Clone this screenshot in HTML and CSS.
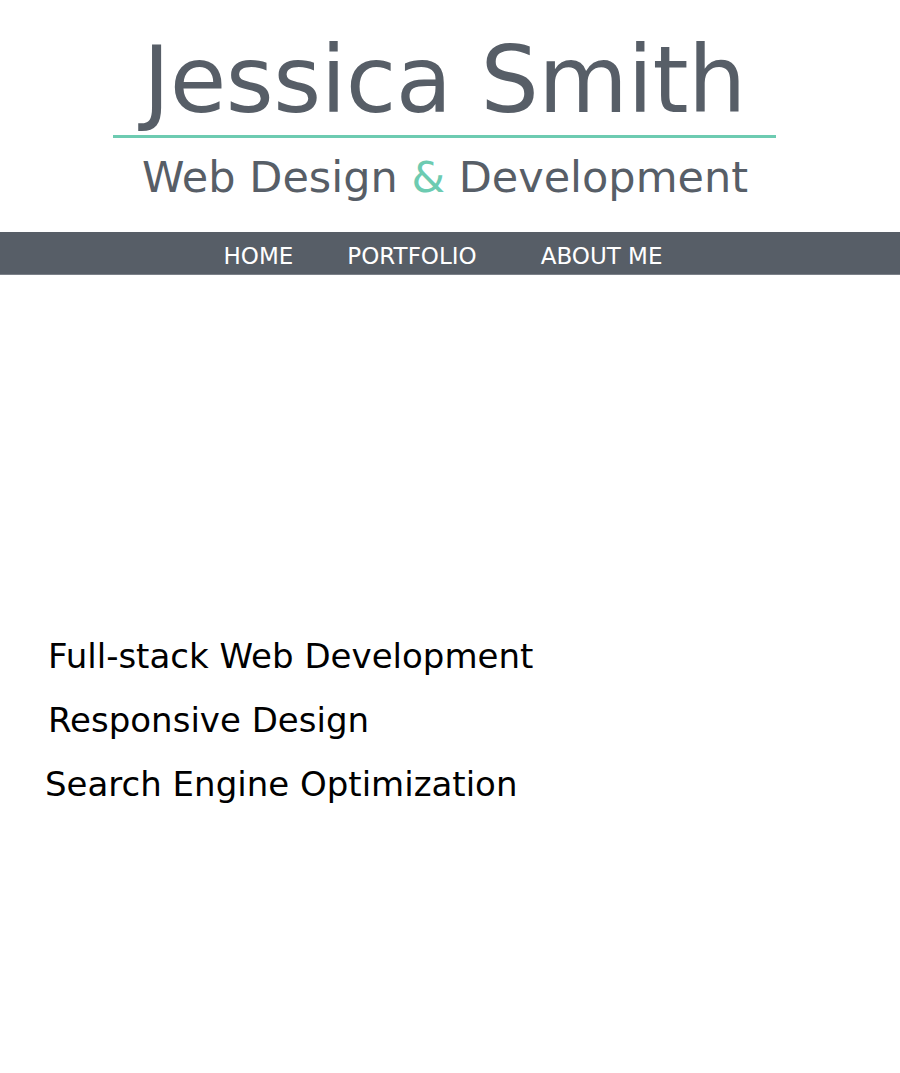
FILE: index.html
```html
<!DOCTYPE html>
<html lang="en">
<head>
<meta charset="utf-8">
<title>Jessica Smith — Web Design &amp; Development</title>
<link rel="stylesheet" href="styles.css">
</head>
<body>
<header class="brand">
  <h1 class="brand-name">Jessica Smith</h1>
  <div class="brand-rule"></div>
  <p class="brand-tag">Web Design <span class="amp">&amp;</span> Development</p>
</header>
<nav class="nav">
  <a class="nav-item nav-home" href="#">HOME</a>
  <a class="nav-item nav-portfolio" href="#">PORTFOLIO</a>
  <a class="nav-item nav-about" href="#">ABOUT ME</a>
</nav>
<main class="services">
  <p class="service service-a">Full-stack Web Development</p>
  <p class="service service-b">Responsive Design</p>
  <p class="service service-c">Search Engine Optimization</p>
</main>
</body>
</html>
```
FILE: styles.css
```css
html, body {
  margin: 0;
  padding: 0;
  background: #ffffff;
}
body {
  font-family: "DejaVu Sans", "Liberation Sans", sans-serif;
  color: #000;
}
.brand {
  width: 663px;
  margin-left: 113px;
  padding-top: 35px;
  text-align: center;
  color: #575e67;
}
.brand-name {
  margin: 0;
  font-size: 92px;
  line-height: 92px;
  font-weight: normal;
  letter-spacing: -0.5px;
}
.brand-rule {
  margin-top: 8px;
  height: 3px;
  background: #6dcbb1;
}
.brand-tag {
  margin: 18px 0 0;
  font-size: 43px;
  line-height: 43px;
  padding-left: 1px;
}
.amp {
  color: #6dcbb1;
}
.nav {
  margin-top: 33px;
  height: 43px;
  box-sizing: border-box;
  background: #575e67;
  border-bottom: 1px solid #7b8088;
  display: flex;
  justify-content: center;
  padding-top: 6px;
  padding-right: 14px;
}
.nav-item {
  color: #ffffff;
  text-decoration: none;
  font-size: 23px;
  line-height: 36px;
}
.nav-portfolio {
  margin-left: 54px;
}
.nav-about {
  margin-left: 64px;
}
.services {
  padding-top: 349px;
  padding-left: 48px;
}
.service {
  margin: 0;
  font-size: 34px;
  line-height: 64px;
}
.service-c {
  margin-left: -3px;
}
```
